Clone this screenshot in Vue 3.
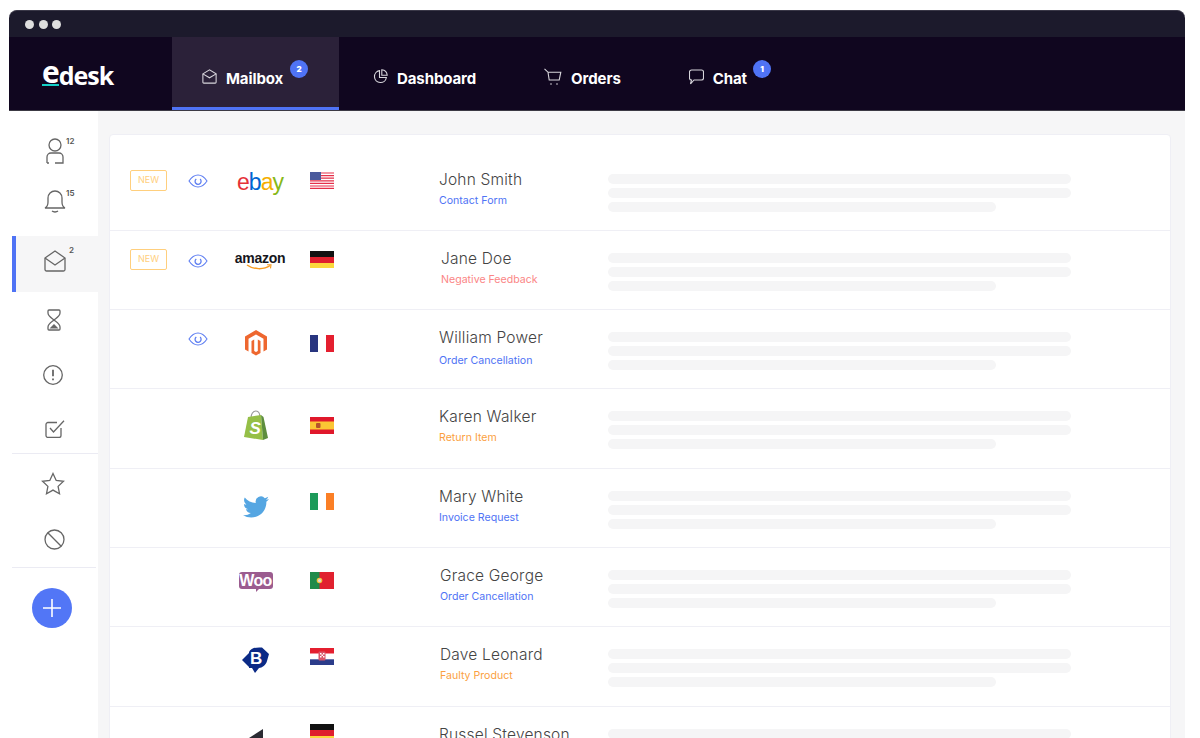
<template>
  <div class="window">

    <!-- TITLE BAR -->
    <div class="titlebar">
      <span class="dot"></span>
      <span class="dot"></span>
      <span class="dot"></span>
    </div>

    <!-- TOP NAV -->
    <nav class="topnav">
      <div class="logo">
        <span class="logo-e">e</span><span>desk</span>
      </div>

      <a class="tab active">
        <svg width="15" height="15" viewBox="0 0 17 17" fill="none" stroke="#d8d6dc" stroke-width="1.2">
          <path d="M1 5.500 8.500 1 16 5.500V15a1 1 0 0 1-1 1H2a1 1 0 0 1-1-1Z" />
          <path d="M1 5.500 8.500 10 16 5.500" />
        </svg>
        <span>Mailbox</span>
        <b class="badge">2</b>
      </a>

      <a class="tab dashboard">
        <svg width="15" height="15" viewBox="0 0 15 15" fill="none" stroke="#d8d6dc" stroke-width="1.1">
          <path d="M6.500 1.600a6 6 0 1 0 6.900 6.900H6.500Z" />
          <path d="M8.800 .8a6 6 0 0 1 5.400 5.400H8.800Z" />
        </svg>
        <span>Dashboard</span>
      </a>

      <a class="tab orders">
        <svg width="18" height="18" viewBox="0 0 18 18" fill="none" stroke="#d8d6dc" stroke-width="1.1">
          <path d="M.5 .8 4 4.200 5.200 12h10l1.600-7.800H4" />
          <circle cx="7" cy="16" r=".8" fill="#d8d6dc" stroke="none" />
          <circle cx="13" cy="16" r=".8" fill="#d8d6dc" stroke="none" />
        </svg>
        <span>Orders</span>
      </a>

      <a class="tab chat">
        <svg width="15" height="16" viewBox="0 0 15 16" fill="none" stroke="#d8d6dc" stroke-width="1.1">
          <path d="M2.500 1h10A2 2 0 0 1 14.500 3v6a2 2 0 0 1-2 2H5l-3.500 4 1-4a2 2 0 0 1-2-2V3a2 2 0 0 1 2-2Z" />
        </svg>
        <span>Chat</span>
        <b class="badge">1</b>
      </a>
    </nav>

    <div class="body">

      <!-- SIDEBAR -->
      <aside class="sidebar">
        <div class="side-item h50">
          <svg class="ico" width="24" height="26" viewBox="0 0 24 26">
            <circle cx="12" cy="7" r="6" />
            <path d="M4 25v-6a4 4 0 0 1 4-4h8a4 4 0 0 1 4 4v6h-8M4 25h2" />
          </svg>
          <small>12</small>
        </div>

        <div class="side-item h50">
          <svg class="ico" width="22" height="24" viewBox="0 0 22 24">
            <path d="M1 19c2-1 3-3 3-6V9a7 7 0 0 1 14 0v4c0 3 1 5 3 6Z" />
            <path d="M8 22c1.500 1.300 4.500 1.300 6 0" />
          </svg>
          <small class="bell-count">15</small>
        </div>

        <div class="side-item active h56">
          <svg class="ico" width="22" height="22" viewBox="0 0 22 22">
            <path d="M1 8 11 1l10 7v11.500a1.500 1.500 0 0 1-1.500 1.500h-17A1.500 1.500 0 0 1 1 19.500Z" />
            <path d="M1 8l10 7 10-7" />
          </svg>
          <small class="mail-count">2</small>
        </div>

        <div class="side-item h56 left1">
          <svg class="ico" width="16" height="22" viewBox="0 0 16 22">
            <path d="M3 1h10a1 1 0 0 1 1 1v2c0 3-3.500 5-6 7-2.500-2-6-4-6-7V2a1 1 0 0 1 1-1Z" />
            <path d="M3 21h10a1 1 0 0 0 1-1v-2c0-3-3.500-5-6-7-2.500 2-6 4-6 7v2a1 1 0 0 0 1 1Z" />
            <path d="M3.500 19.500 8 15l4.500 4.500Z" fill="#666" stroke="none" />
          </svg>
        </div>

        <div class="side-item h53 left2">
          <svg class="ico" width="20" height="20" viewBox="0 0 20 20">
            <circle cx="10" cy="10" r="9.300" />
            <path d="M10 4.800v6.500M10 13.500v1.700" stroke-width="1.800" />
          </svg>
        </div>

        <div class="side-item h52 check">
          <svg class="ico" width="20" height="18" viewBox="0 0 20 18">
            <path d="M16 8v7.500a2 2 0 0 1-2 2H3a2 2 0 0 1-2-2V4.500a2 2 0 0 1 2-2h9" />
            <path d="M5 8l3.500 4L19 .8" />
          </svg>
        </div>

        <div class="side-line"></div>

        <div class="side-item h58 left2">
          <svg class="ico" width="24" height="23" viewBox="0 0 24 23">
            <path d="m12 1.500 3.200 6.900 7.300.9-5.400 5.100 1.400 7.300L12 18.100l-6.500 3.600 1.400-7.300-5.400-5.100 7.300-.9Z" />
          </svg>
        </div>

        <div class="side-item h55">
          <svg class="ico" width="21" height="21" viewBox="0 0 21 21">
            <circle cx="10.500" cy="10.500" r="9.500" />
            <path d="M3.800 3.800 17.200 17.200" />
          </svg>
        </div>

        <div class="side-line short"></div>

        <button class="add">
          <svg width="18" height="18" viewBox="0 0 18 18" stroke="#fff" stroke-width="1.600">
            <path d="M9 0v18M0 9h18" />
          </svg>
        </button>
      </aside>

      <!-- MESSAGES -->
      <main class="content">
        <div class="card">
          <div class="row" v-for="row in rows" :key="row.name">

            <div class="cell-new">
              <span class="new" v-if="row.isNew">NEW</span>
            </div>

            <div class="cell-eye" :style="{ height: row.eyeY * 2 + 'px' }">
              <svg v-if="row.eyeY" width="20" height="14" viewBox="0 0 20 14" fill="none" stroke="#5f7ff2" stroke-width="1.100">
                <path d="M1 7c2.500-3.800 5.500-6 9-6s6.500 2.200 9 6c-2.500 3.800-5.500 6-9 6S3.500 10.800 1 7Z" />
                <path d="M8.300 4.900a3 3 0 1 0 3.800.2" stroke-width="1.300" />
              </svg>
            </div>

            <div class="cell-logo" :style="{ height: row.logoY * 2 + 'px' }">
              <div class="logo-ebay" v-if="row.logo === 'ebay'">
                <span class="red">e</span><span class="blue">b</span><span class="yellow">a</span><span class="green">y</span>
              </div>

              <div class="logo-amazon" v-if="row.logo === 'amazon'">
                <span>amazon</span>
                <svg width="27" height="7" viewBox="0 0 27 7" fill="none" stroke="#f79b1f" stroke-width="1.500">
                  <path d="M1 1c6 4.500 17 5 23 .5" />
                  <path d="M21 .8h4l-.5 3.500" stroke-width="1.100" />
                </svg>
              </div>

              <svg class="nudge" v-if="row.logo === 'magento'" width="24" height="26" viewBox="0 0 24 26" fill="#ee672f">
                <path d="M12 0 23 6.500V19.500L19.500 21.500V8.700L12 4.400 4.500 8.700V21.500L1 19.500V6.500Z" />
                <path d="M10.200 9.500V21L12 22 13.800 21V9.500L16.500 11V23L12 25.500 7.500 23V11Z" />
              </svg>

              <div class="logo-shopify nudge" v-if="row.logo === 'shopify'">
                <svg width="26" height="31" viewBox="0 0 26 31">
                  <path d="M8 8c0-4 2-7 5-7s4 3 4 7" fill="none" stroke="#9a9a9a" stroke-width="1.200" />
                  <path d="M5 7 18 5 20 30 1 27Z" fill="#95bf47" />
                  <path d="M18 5 20.500 7 25 28 20 30Z" fill="#5e8e3e" />
                </svg>
                <span>S</span>
              </div>

              <svg class="nudge" v-if="row.logo === 'twitter'" width="26" height="22" viewBox="0 0 24 20" fill="#55a6e2">
                <path d="M23.950 2.600a10 10 0 0 1-2.820.770 4.960 4.960 0 0 0 2.160-2.720c-.95.560-2 .96-3.130 1.180a4.920 4.920 0 0 0-8.380 4.490C7.690 6.100 4.070 4.130 1.640 1.170a4.820 4.820 0 0 0-.66 2.470c0 1.710.87 3.220 2.180 4.100a4.900 4.900 0 0 1-2.230-.62v.06a4.920 4.920 0 0 0 3.950 4.830 5 5 0 0 1-2.210.08 4.940 4.940 0 0 0 4.600 3.420 9.870 9.870 0 0 1-6.100 2.100c-.39 0-.78-.02-1.170-.06a14 14 0 0 0 7.560 2.210c9.050 0 14-7.500 14-13.990 0-.21 0-.42-.02-.63a9.940 9.940 0 0 0 2.410-2.540Z" />
              </svg>

              <div class="logo-woo nudge" v-if="row.logo === 'woo'">Woo</div>

              <div class="logo-b nudge" v-if="row.logo === 'b'">
                <svg width="27" height="27" viewBox="0 0 27 27" fill="#0b2a86">
                  <path d="M0 13 7 6 7 20Z" />
                  <path d="M7 5C9 1 14 0 20 .5L27 7 25 14C24 18 20 21 17 21L13 26 10 21H7Z" />
                </svg>
                <span>B</span>
              </div>

              <svg class="nudge" v-if="row.logo === 'horn'" width="16" height="12" viewBox="0 0 16 12" fill="#2b2b33">
                <path d="M15 0V12H1V9Z" />
              </svg>
            </div>

            <div class="cell-flag" :style="{ height: row.flagY * 2 + 'px' }">
              <svg width="24" height="17" viewBox="0 0 24 17">
                <template v-if="row.flag === 'us'">
                  <rect width="24" height="17" fill="#fff" />
                  <path d="M0 1h24M0 3.600h24M0 6.200h24M0 8.800h24M0 11.400h24M0 14h24M0 16.400h24" stroke="#e5304a" stroke-width="1.200" />
                  <rect width="11" height="8" fill="#4a5a9c" />
                </template>
                <template v-if="row.flag === 'de'">
                  <rect width="24" height="6" fill="#111" />
                  <rect y="6" width="24" height="6" fill="#df1f2d" />
                  <rect y="12" width="24" height="5" fill="#fbd83c" />
                </template>
                <template v-if="row.flag === 'fr'">
                  <rect width="8" height="17" fill="#28357f" />
                  <rect x="8" width="8" height="17" fill="#fff" />
                  <rect x="16" width="8" height="17" fill="#e41f2f" />
                </template>
                <template v-if="row.flag === 'es'">
                  <rect width="24" height="17" fill="#e0182b" />
                  <rect y="4.500" width="24" height="8" fill="#fbc534" />
                  <rect x="6" y="6" width="4.500" height="5" rx="1" fill="#b5522a" />
                </template>
                <template v-if="row.flag === 'ie'">
                  <rect width="8" height="17" fill="#1c9a5a" />
                  <rect x="8" width="8" height="17" fill="#fff" />
                  <rect x="16" width="8" height="17" fill="#fb7f26" />
                </template>
                <template v-if="row.flag === 'pt'">
                  <rect width="24" height="17" fill="#e1212f" />
                  <rect width="9.500" height="17" fill="#1f8a4a" />
                  <circle cx="9.500" cy="8.500" r="2.800" fill="#f2c53d" />
                  <circle cx="9.500" cy="8.500" r="1.500" fill="#d9d9e6" />
                </template>
                <template v-if="row.flag === 'hr'">
                  <rect width="24" height="5.700" fill="#e41f2f" />
                  <rect y="5.700" width="24" height="5.600" fill="#fff" />
                  <rect y="11.300" width="24" height="5.700" fill="#2b3c8a" />
                  <rect x="8.500" y="3.500" width="7" height="9" rx="1" fill="#d9566a" />
                  <path d="M10 5h1.500v1.500H10Zm3 0h1.500v1.500H13Zm-1.500 1.500H13V8h-1.500ZM10 8h1.500v1.500H10Zm3 0h1.500v1.500H13Z" fill="#fff" />
                </template>
              </svg>
            </div>

            <div class="person" :style="{ paddingLeft: row.nameX + 'px' }">
              <div class="name">{{ row.name }}</div>
              <div class="tag" v-if="row.tag" :class="row.color" :style="{ marginTop: row.tagY + 'px' }">{{ row.tag }}</div>
            </div>

            <div class="lines">
              <div></div>
              <div></div>
              <div class="third"></div>
            </div>

          </div>
        </div>
      </main>

    </div>
  </div>
</template>

<script setup>
const rows = [
  { name: 'John Smith', tag: 'Contact Form', color: 'blue', isNew: true, eyeY: 29, logo: 'ebay', logoY: 30, flag: 'us', flagY: 29, nameX: 0, tagY: 4 },
  { name: 'Jane Doe', tag: 'Negative Feedback', color: 'pink', isNew: true, eyeY: 30, logo: 'amazon', logoY: 30, flag: 'de', flagY: 29, nameX: 2, tagY: 4 },
  { name: 'William Power', tag: 'Order Cancellation', color: 'blue', eyeY: 29, logo: 'magento', logoY: 33, flag: 'fr', flagY: 33, nameX: 0, tagY: 6 },
  { name: 'Karen Walker', tag: 'Return Item', color: 'orange', eyeY: 0, logo: 'shopify', logoY: 36, flag: 'es', flagY: 36, nameX: 0, tagY: 4 },
  { name: 'Mary White', tag: 'Invoice Request', color: 'blue', eyeY: 0, logo: 'twitter', logoY: 38, flag: 'ie', flagY: 33, nameX: 0, tagY: 4 },
  { name: 'Grace George', tag: 'Order Cancellation', color: 'blue', eyeY: 0, logo: 'woo', logoY: 32, flag: 'pt', flagY: 32, nameX: 1, tagY: 4 },
  { name: 'Dave Leonard', tag: 'Faulty Product', color: 'orange', eyeY: 0, logo: 'b', logoY: 33, flag: 'hr', flagY: 29, nameX: 1, tagY: 4 },
  { name: 'Russel Stevenson', eyeY: 0, logo: 'horn', logoY: 28, flag: 'de', flagY: 26, nameX: 0 }
]
</script>

<style>
html, body {
  background: #fff;
  overflow: hidden;
}
</style>

<style scoped>
* {
  box-sizing: border-box;
}

.window {
  width: 1176px;
  height: 738px;
  margin-left: 9px;
  padding-top: 10px;
  display: flex;
  flex-direction: column;
  overflow: hidden;
  font-family: Inter, "Liberation Sans", sans-serif;
}

.titlebar {
  height: 27px;
  flex: none;
  background: #1c1a2c;
  border-top: 1px solid #3a3848;
  border-radius: 8px 8px 0 0;
  display: flex;
  align-items: center;
  gap: 4.500px;
  padding-left: 16px;
}

.dot {
  width: 9px;
  height: 9px;
  border-radius: 50%;
  background: #dedede;
}

.topnav {
  height: 74px;
  flex: none;
  display: flex;
  background: #10061f;
  border-bottom: 1px solid #3c3a44;
  color: #fff;
}

.logo {
  width: 163px;
  padding: 22px 0 0 33px;
  font-family: "Open Sans", sans-serif;
  font-size: 25px;
  font-weight: 700;
  letter-spacing: -1px;
  line-height: 32px;
}

.logo-e {
  font-size: 30px;
  line-height: 20px;
  border-bottom: 2px solid #14d1c8;
  display: inline-block;
  height: 24px;
  vertical-align: 2px;
}

.tab {
  position: relative;
  display: flex;
  align-items: center;
  gap: 9px;
  font-size: 15px;
  font-weight: 700;
  letter-spacing: -.1px;
  padding-top: 6px;
}

.tab span {
  padding-top: 4px;
}

.tab.active {
  width: 167px;
  padding-left: 30px;
  background: #2b2139;
  box-shadow: inset 0 -3px 0 #4f73f5;
}

.dashboard {
  margin-left: 34px;
}

.orders {
  margin-left: 68px;
}

.chat {
  margin-left: 68px;
}

.badge {
  position: absolute;
  top: 23px;
  right: -24px;
  width: 18px;
  height: 18px;
  border-radius: 50%;
  background: #4f73f5;
  font-size: 8px;
  line-height: 18px;
  text-align: center;
}

.tab.active .badge {
  right: 31px;
}

.body {
  flex: 1;
  display: flex;
  min-height: 0;
}

.sidebar {
  width: 89px;
  flex: none;
  padding: 15px 0 0 3px;
  background: #fff;
  display: flex;
  flex-direction: column;
}

.side-item {
  position: relative;
  display: flex;
  align-items: center;
  justify-content: center;
  padding-right: 1px;
  flex: none;
}

.h50 { height: 50px; }
.h52 { height: 52px; }
.h53 { height: 53px; }
.h55 { height: 55px; }
.h56 { height: 56px; }
.h58 { height: 58px; }

.left1 { padding-right: 3px; }
.left2 { padding-right: 5px; }
.check { padding: 4px 1px 0 0; }

.side-item.active {
  margin-top: 10px;
  padding-bottom: 6px;
  background: #f6f6f7;
  box-shadow: inset 4px 0 0 #4f73f5;
}

.ico {
  fill: none;
  stroke: #666;
  stroke-width: 1.300;
}

.side-item small {
  position: absolute;
  left: 54px;
  top: 10px;
  font-size: 8px;
  font-weight: 600;
  color: #555;
}

.side-item small.bell-count {
  top: 12px;
}

.side-item small.mail-count {
  left: 57px;
  top: 9px;
}

.side-line {
  height: 1px;
  flex: none;
  background: #ebebf3;
}

.side-line.short {
  margin-right: 2px;
}

.add {
  width: 40px;
  height: 40px;
  margin: 20px 0 0 20px;
  padding: 0;
  border: none;
  border-radius: 50%;
  background: #5276f6;
  display: flex;
  align-items: center;
  justify-content: center;
  flex: none;
}

.content {
  flex: 1;
  min-width: 0;
  padding: 23px 14px 0 11px;
  background: #f6f6f7;
}

.card {
  padding-top: 16.500px;
  background: #fff;
  border: 1px solid #efeff5;
  border-radius: 4px;
  min-height: 800px;
}

.row {
  height: 79.330px;
  padding-left: 20px;
  border-bottom: 1.500px solid #efeff5;
  display: grid;
  grid-template-columns: 58px 42px 60px 149px 169px 463px;
  align-items: start;
}

.cell-new {
  display: flex;
}

.new {
  width: 37px;
  height: 21px;
  margin-top: 18.500px;
  border: 1.500px solid #ffcf7d;
  border-radius: 2px;
  color: #ffcf7d;
  font-size: 9px;
  line-height: 18px;
  text-align: center;
}

.cell-eye {
  display: flex;
  align-items: center;
}

.cell-logo {
  display: flex;
  align-items: center;
  justify-content: center;
}

.nudge {
  margin-left: -9px;
}

.logo-ebay {
  font-family: "Liberation Sans", sans-serif;
  font-size: 23px;
  letter-spacing: -1px;
  line-height: 24px;
}

.logo-ebay .red { color: #e53238; }
.logo-ebay .blue { color: #0064d2; }
.logo-ebay .yellow { color: #f5af02; }
.logo-ebay .green { color: #86b817; }

.logo-amazon {
  display: flex;
  flex-direction: column;
  align-items: center;
  font-family: "Liberation Sans", sans-serif;
  font-size: 14px;
  font-weight: 700;
  letter-spacing: -.3px;
  line-height: 14px;
  color: #16161c;
}

.logo-amazon svg {
  margin-top: -1px;
}

.logo-shopify {
  position: relative;
  width: 26px;
  height: 31px;
}

.logo-shopify span {
  position: absolute;
  left: 7px;
  top: 10px;
  font-family: "Liberation Sans", sans-serif;
  font-size: 17px;
  font-weight: 700;
  font-style: italic;
  line-height: 17px;
  color: #fff;
}

.logo-woo {
  position: relative;
  width: 34px;
  height: 17px;
  border-radius: 3px;
  background: #9b5c8f;
  color: #fff;
  font-family: "Liberation Sans", sans-serif;
  font-size: 16px;
  font-weight: 700;
  line-height: 17px;
  letter-spacing: -.6px;
  text-align: center;
}

.logo-woo::after {
  content: "";
  position: absolute;
  left: 17px;
  top: 17px;
  border-style: solid;
  border-width: 3px 3px 0 0;
  border-color: #9b5c8f transparent transparent transparent;
}

.logo-b {
  position: relative;
  width: 27px;
  height: 27px;
}

.logo-b span {
  position: absolute;
  left: 8px;
  top: 3px;
  color: #fff;
  font-family: "Liberation Sans", sans-serif;
  font-size: 17px;
  font-weight: 700;
  line-height: 18px;
}

.cell-flag {
  display: flex;
  align-items: center;
  padding-left: 20px;
}

.person {
  padding-top: 18px;
}

.name {
  font-size: 15.500px;
  font-weight: 300;
  letter-spacing: .2px;
  line-height: 20px;
  color: #444;
}

.tag {
  font-size: 10.600px;
  line-height: 14px;
}

.tag.blue { color: #4f73f5; }
.tag.pink { color: #fb8585; }
.tag.orange { color: #fb9f3f; }

.lines {
  padding-top: 22px;
  display: flex;
  flex-direction: column;
  gap: 4px;
}

.lines div {
  height: 10px;
  border-radius: 5px;
  background: #f5f5f6;
}

.lines .third {
  width: 388px;
}
</style>
